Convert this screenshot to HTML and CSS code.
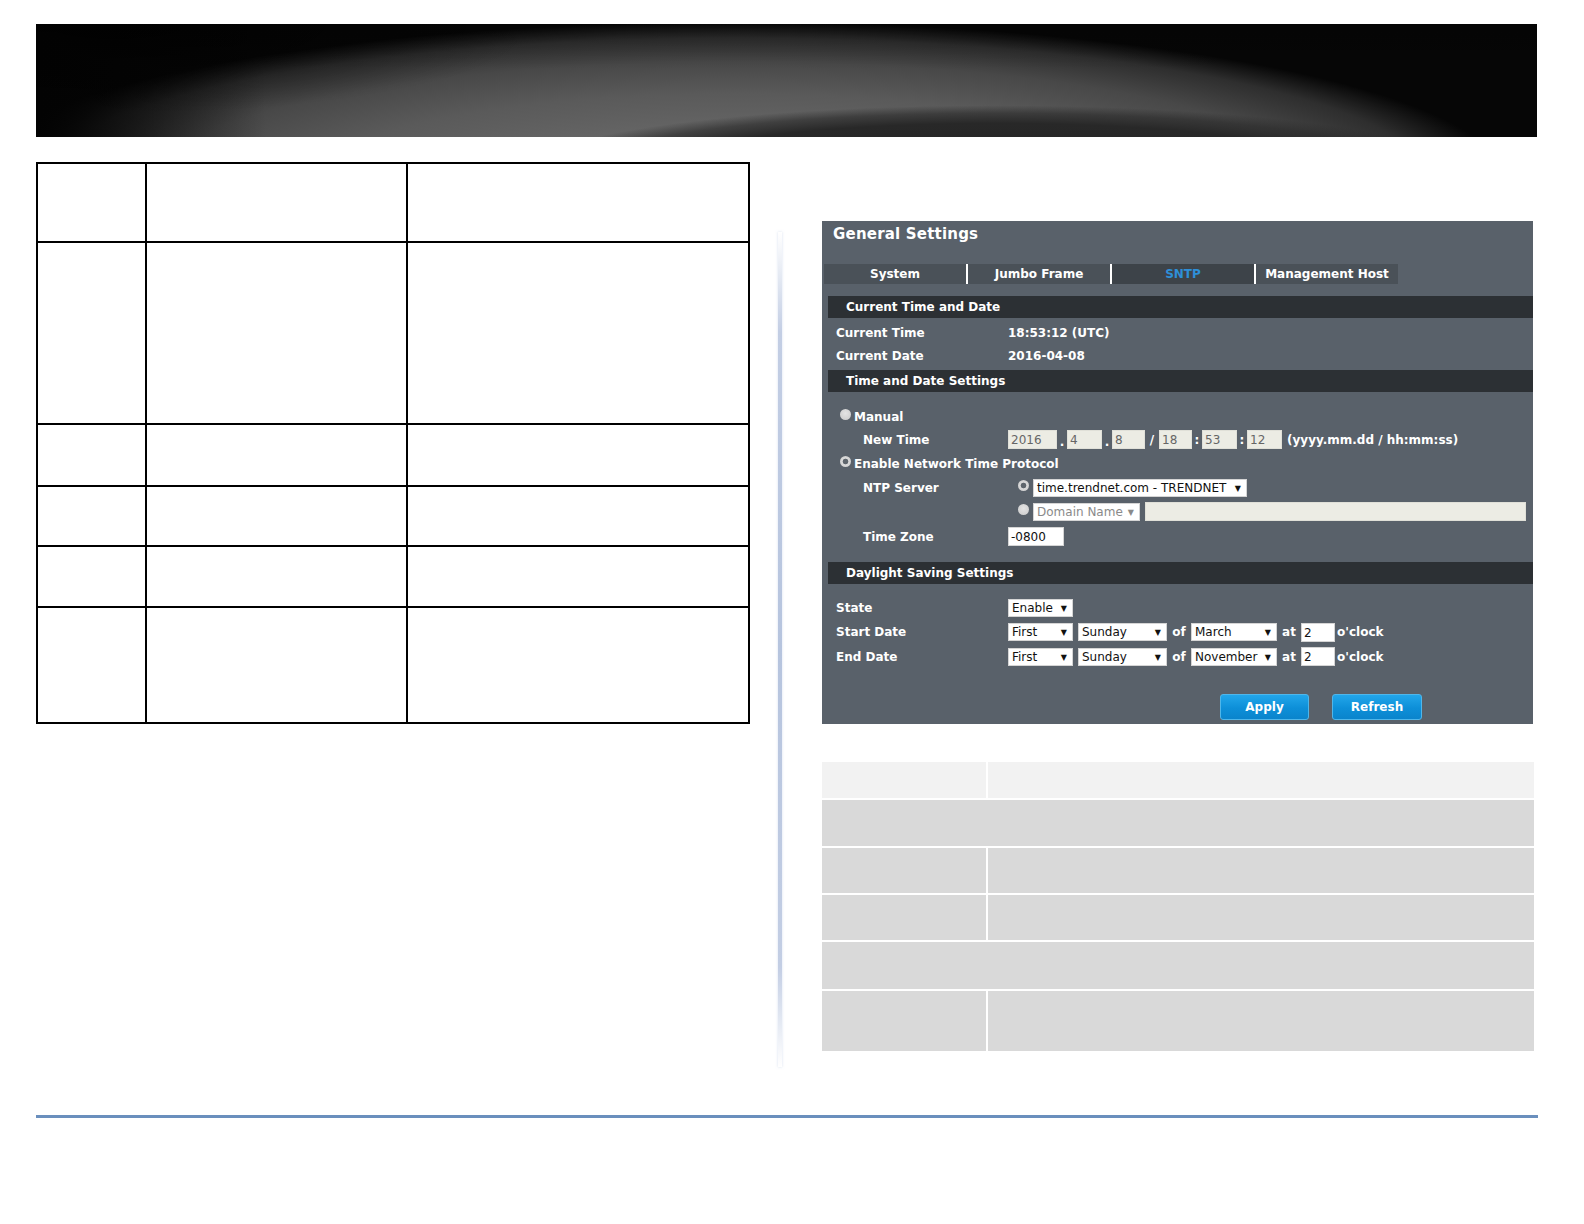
FILE: index.html
```html
<!DOCTYPE html>
<html>
<head>
<meta charset="utf-8">
<link rel="stylesheet" href="styles.css">
</head>
<body>
<div class="banner"><div class="banner-shade"></div></div>
<div class="content">
  <table class="spec">
    <colgroup><col class="c1"><col class="c2"><col class="c3"></colgroup>
    <tr class="r1"><td></td><td></td><td></td></tr>
    <tr class="r2"><td></td><td></td><td></td></tr>
    <tr class="r3"><td></td><td></td><td></td></tr>
    <tr class="r4"><td></td><td></td><td></td></tr>
    <tr class="r5"><td></td><td></td><td></td></tr>
    <tr class="r6"><td></td><td></td><td></td></tr>
  </table>
  <div class="divider"></div>
  <div class="right">
    <div class="panel">
      <div class="ptitle">General Settings</div>
      <div class="tabs">
        <div class="tab">System</div>
        <div class="tab">Jumbo Frame</div>
        <div class="tab active">SNTP</div>
        <div class="tab">Management Host</div>
      </div>
      <div class="bar b1">Current Time and Date</div>
      <div class="row h23 first"><span class="lbl">Current Time</span><span>18:53:12 (UTC)</span></div>
      <div class="row h23"><span class="lbl">Current Date</span><span>2016-04-08</span></div>
      <div class="bar b2">Time and Date Settings</div>
      <div class="row rad manual"><span class="radio"></span><span class="rlbl">Manual</span></div>
      <div class="row ind h23">
        <span class="lbl">New Time</span>
        <span class="tin w49">2016</span><span class="sep dot">.</span>
        <span class="tin w35">4</span><span class="sep dot">.</span>
        <span class="tin w33">8</span><span class="sep slash">/</span>
        <span class="tin w33">18</span><span class="sep">:</span>
        <span class="tin w35">53</span><span class="sep">:</span>
        <span class="tin w35">12</span><span class="fmt">(yyyy.mm.dd / hh:mm:ss)</span>
      </div>
      <div class="row rad h25"><span class="radio on"></span><span class="rlbl">Enable Network Time Protocol</span></div>
      <div class="row ind h23">
        <span class="lbl">NTP Server</span>
        <span class="radio on r2"></span>
        <span class="sel w214"><span>time.trendnet.com - TRENDNET</span><span class="arr">▼</span></span>
      </div>
      <div class="row ind h25">
        <span class="lbl"></span>
        <span class="radio r2"></span>
        <span class="sel w107 dis"><span>Domain Name</span><span class="arr">▼</span></span>
        <span class="tin dom"></span>
      </div>
      <div class="row ind h25">
        <span class="lbl">Time Zone</span>
        <span class="win w56">-0800</span>
      </div>
      <div class="bar b3">Daylight Saving Settings</div>
      <div class="row h24 first3"><span class="lbl">State</span><span class="sel w65"><span>Enable</span><span class="arr">▼</span></span></div>
      <div class="row h24">
        <span class="lbl">Start Date</span>
        <span class="sel w65"><span>First</span><span class="arr">▼</span></span>
        <span class="sel w89 ml5"><span>Sunday</span><span class="arr">▼</span></span>
        <span class="word">of</span>
        <span class="sel w86"><span>March</span><span class="arr">▼</span></span>
        <span class="word">at</span>
        <span class="win w34">2</span><span class="oc">o'clock</span>
      </div>
      <div class="row h25">
        <span class="lbl">End Date</span>
        <span class="sel w65"><span>First</span><span class="arr">▼</span></span>
        <span class="sel w89 ml5"><span>Sunday</span><span class="arr">▼</span></span>
        <span class="word">of</span>
        <span class="sel w86"><span>November</span><span class="arr">▼</span></span>
        <span class="word">at</span>
        <span class="win w34">2</span><span class="oc">o'clock</span>
      </div>
      <div class="btns"><span class="btn">Apply</span><span class="btn wide">Refresh</span></div>
    </div>
    <div class="grid">
      <div class="g head"></div><div class="g head"></div>
      <div class="g full h46"></div>
      <div class="g"></div><div class="g"></div>
      <div class="g"></div><div class="g"></div>
      <div class="g full"></div>
      <div class="g"></div><div class="g"></div>
    </div>
  </div>
</div>
<div class="footline"></div>
</body>
</html>
```

FILE: styles.css
```css
html, body { margin: 0; padding: 0; background: #fff; }
body { font-family: "DejaVu Sans", Verdana, sans-serif; }

.banner {
  margin: 24px 0 0 36px;
  width: 1501px;
  height: 113px;
  position: relative;
  overflow: hidden;
  background:
    linear-gradient(to right, #030303 0px, rgba(3,3,3,0.9) 30px, rgba(0,0,0,0) 230px),
    radial-gradient(ellipse 540px 78px at 960px 150px, #222 0%, #282828 65%, rgba(40,40,40,0.6) 78%, rgba(40,40,40,0) 88%),
    radial-gradient(ellipse 770px 160px at 700px 158px, #6a6a6a 0%, #666 30%, #5a5a5a 55%, #484848 75%, #2e2e2e 90%, rgba(10,10,10,0) 100%),
    #060606;
}
.banner-shade {
  position: absolute;
  left: 0; top: 0; right: 0; bottom: 0;
  background:
    radial-gradient(ellipse 420px 90px at 80px 0px, rgba(0,0,0,0.6) 0%, rgba(0,0,0,0) 100%),
    linear-gradient(to bottom, rgba(0,0,0,0.2) 0%, rgba(0,0,0,0) 40%);
}

.content {
  display: flex;
  margin: 25px 0 0 36px;
  width: 1502px;
  height: 953px;
}

.spec {
  border-collapse: collapse;
  table-layout: fixed;
  width: 712px;
  align-self: flex-start;
}
.spec td { border: 2px solid #000; padding: 0; }
.spec .c1 { width: 109px; }
.spec .c2 { width: 261px; }
.spec .c3 { width: 342px; }
.spec .r1 { height: 79px; }
.spec .r2 { height: 182px; }
.spec .r3 { height: 62px; }
.spec .r4 { height: 60px; }
.spec .r5 { height: 61px; }
.spec .r6 { height: 116px; }

.divider {
  margin: 70px 0 0 28px;
  width: 4px;
  height: 835px;
  background: linear-gradient(to bottom, rgba(190,202,226,0) 0%, #c3cee4 12%, #b6c4de 50%, #c3cee4 88%, rgba(190,202,226,0) 100%);
  box-shadow: 0 0 3px rgba(190,205,230,0.6);
}

.right {
  margin-left: 40px;
  width: 712px;
  padding-top: 59px;
}

.panel {
  width: 711px;
  height: 503px;
  box-sizing: border-box;
  background: #59616a;
  color: #fff;
  font-size: 12px;
  font-weight: bold;
  padding-top: 1px;
}
.ptitle {
  height: 24px;
  padding-left: 11px;
  font-size: 15px;
  line-height: 24px;
  letter-spacing: 0.2px;
}
.tabs {
  display: flex;
  margin: 18px 0 0 2px;
  height: 20px;
}
.tab {
  width: 142px;
  background: #4a5158;
  text-align: center;
  line-height: 20px;
}
.tab + .tab { border-left: 2px solid #fff; }
.tab.active { background: #3d4349; color: #2e8fd8; }

.bar {
  margin-left: 6px;
  height: 22px;
  background: #2c3034;
  padding-left: 18px;
  line-height: 22px;
}
.b1 { margin-top: 12px; }
.b2 { margin-top: 3px; }
.b3 { margin-top: 13px; }

.row {
  display: flex;
  align-items: center;
  padding-left: 14px;
  height: 22px;
  white-space: nowrap;
}
.row.first { margin-top: 3px; }
.row.first3 { margin-top: 12px; }
.h23 { height: 23px; }
.h24 { height: 24px; }
.h25 { height: 25px; }
.lbl { width: 172px; flex: none; }
.row.ind { padding-left: 41px; }
.row.ind .lbl { width: 145px; }
.row.rad { padding-left: 18px; }
.row.manual { margin-top: 14px; }
.rlbl { margin-left: 3px; }

.radio {
  width: 11px;
  height: 11px;
  border-radius: 50%;
  background: radial-gradient(circle at 50% 40%, #e4e4e4 0%, #c9c9c9 100%);
  flex: none;
  margin-top: -5px;
}
.radio.on {
  background: radial-gradient(circle, #5f666d 0px, #5f666d 2.5px, #dcdcdc 3.2px, #c4c4c4 100%);
}
.radio.r2 { margin-left: 10px; margin-right: 4px; margin-top: -4px; }

.tin, .win, .sel {
  box-sizing: border-box;
  height: 19px;
  font-weight: normal;
  font-size: 12px;
  line-height: 19px;
  padding-left: 2px;
  flex: none;
}
.tin { background: #ecece4; color: #666; border: 1px solid #e0e0d8; }
.win { background: #fff; color: #111; border: 1px solid #d5d5d5; }
.sel {
  background: #fff;
  color: #111;
  border: 1px solid #d5d5d5;
  display: flex;
  justify-content: space-between;
  padding: 0 5px 0 3px;
  height: 18px;
  line-height: 17px;
}
.sel.dis { color: #8a8a8a; }
.arr { font-size: 8px; }
.sel.dis .arr { color: #8a8a8a; }

.w49 { width: 49px; }
.w35 { width: 35px; }
.w33 { width: 33px; }
.w34 { width: 34px; }
.w56 { width: 56px; }
.w65 { width: 65px; }
.w86 { width: 86px; }
.w89 { width: 89px; }
.w107 { width: 107px; }
.w214 { width: 214px; }
.ml5 { margin-left: 5px; }

.sep { width: 10px; text-align: center; flex: none; }
.sep.dot { align-self: flex-end; line-height: 17px; }
.sep.slash { width: 14px; }
.fmt { margin-left: 5px; }
.tin.dom { width: 381px; margin-left: 5px; }
.word { width: 24px; text-align: center; flex: none; }
.oc { margin-left: 2px; }

.btns {
  display: flex;
  gap: 23px;
  margin-top: 25px;
  padding-left: 398px;
}
.btn {
  box-sizing: border-box;
  width: 89px;
  height: 26px;
  border: 1px solid #4fb6ea;
  border-radius: 3px;
  background: linear-gradient(to bottom, #22a6ea 0%, #0d8fd8 55%, #0a84cc 100%);
  color: #fff;
  font-size: 12px;
  text-align: center;
  line-height: 24px;
}
.btn.wide { width: 90px; }

.grid {
  margin-top: 38px;
  display: grid;
  grid-template-columns: 164px 546px;
  grid-template-rows: 36px 46px 45px 45px 47px 60px;
  gap: 2px;
  width: 712px;
}
.g { background: #d9d9d9; }
.g.head { background: #f2f2f2; }
.g.full { grid-column: 1 / -1; }

.footline {
  margin-left: 36px;
  width: 1502px;
  height: 3px;
  background: #6a8fbd;
}
```
